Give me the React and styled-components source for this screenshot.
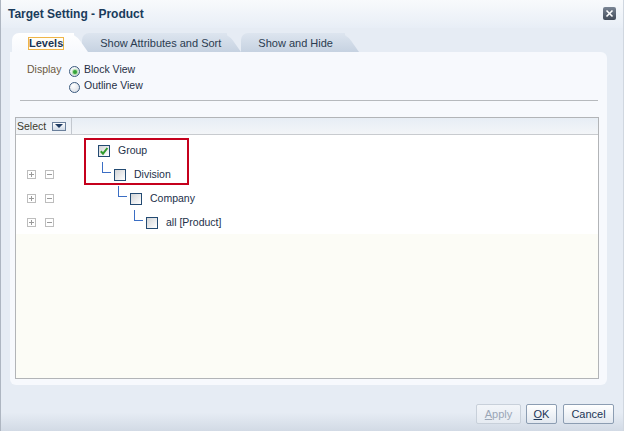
import React from "react";
import styled, { createGlobalStyle } from "styled-components";

const Global = createGlobalStyle`
  html, body { margin: 0; padding: 0; }
  body {
    width: 624px; height: 431px; overflow: hidden;
    background: #e6ecf4;
    font-family: "Liberation Sans", Arial, sans-serif;
  }
`;

const Window = styled.div`
  width: 624px;
  height: 431px;
  box-sizing: border-box;
  display: flex;
  flex-direction: column;
  background: #e6ecf4;
  border-left: 1px solid #aeb6c1;
  border-right: 1px solid #d0d7e0;
`;

const TitleBar = styled.div`
  height: 28px;
  flex: none;
  display: flex;
  align-items: center;
  justify-content: space-between;
  padding: 0 7px 0 7px;
  background: linear-gradient(#f8fafc, #e8eef6);
`;

const Title = styled.div`
  font-size: 12px;
  font-weight: bold;
  color: #1a3b5b;
  margin-top: 0;
`;

const CloseButton = styled.div`
  width: 13px;
  height: 13px;
  border-radius: 2px;
  background: linear-gradient(#7a8594, #434c59);
  display: flex;
  align-items: center;
  justify-content: center;
  margin-top: -2px;
`;

const TabRow = styled.div`
  flex: none;
  display: flex;
  height: 19px;
  margin-top: 5px;
  padding-left: 11px;
`;

const Tab = styled.div`
  position: relative;
  height: 19px;
  box-sizing: border-box;
  display: flex;
  align-items: center;
  padding: 2px ${(p) => p.$pr}px 0 ${(p) => p.$pl}px;
  margin-left: ${(p) => p.$ml}px;
  font-size: 11px;
  color: ${(p) => (p.$active ? "#1a3554" : "#2a3b50")};
  font-weight: ${(p) => (p.$active ? "bold" : "normal")};
  background: ${(p) =>
    p.$active ? "linear-gradient(#ffffff, #f7f9fd)" : "linear-gradient(#dde5ef, #c6d2e1)"};
  border-top-left-radius: 7px;
  z-index: ${(p) => p.$z};
  &::after {
    content: "";
    position: absolute;
    top: 0;
    bottom: 0;
    right: -14px;
    width: 20px;
    background: inherit;
    border-top-right-radius: 8px;
    transform: skewX(35deg);
    transform-origin: bottom left;
    z-index: -1;
  }
`;

const TabLabel = styled.span`
  position: relative;
  line-height: 11px;
  border: 1px solid ${(p) => (p.$focus ? "#efb548" : "transparent")};
  background: ${(p) => (p.$focus ? "#fffdf6" : "transparent")};
  padding: 0 0;
`;

const Main = styled.div`
  flex: 1;
  display: flex;
  flex-direction: column;
  padding: 0 16px 0 9px;
`;

const Panel = styled.div`
  height: 333px;
  box-sizing: border-box;
  background: #f7f9fd;
  border-radius: 0 6px 6px 6px;
  display: flex;
  flex-direction: column;
  padding: 9px 8px 6px 5px;
  position: relative;
  z-index: 5;
`;

const Options = styled.div`
  display: flex;
  margin-left: 12px;
  font-size: 10.5px;
`;

const OptLabel = styled.div`
  color: #6b5a43;
  line-height: 16px;
  width: 42px;
`;

const RadioList = styled.div`
  display: flex;
  flex-direction: column;
`;

const RadioItem = styled.div`
  display: flex;
  align-items: center;
  height: 16px;
  color: #1f2f45;
  gap: 4px;
`;

const Radio = styled.span`
  width: 11px;
  height: 11px;
  box-sizing: border-box;
  border-radius: 50%;
  border: 1px solid #3b5a7e;
  background: radial-gradient(circle at 35% 30%, #ffffff, #d3d9e1);
  display: flex;
  align-items: center;
  justify-content: center;
  margin-top: 5px;
  &::after {
    content: "";
    width: 4px;
    height: 4px;
    border-radius: 50%;
    background: #35a33a;
    box-shadow: 0 0 1px 1px #a9dca5;
    display: ${(p) => (p.$checked ? "block" : "none")};
  }
`;

const Rule = styled.div`
  height: 1px;
  background: #b6b9bd;
  margin: 7px 1px 0 5px;
`;

const Table = styled.div`
  flex: 1;
  margin-top: 16px;
  border: 1px solid #b2b4b7;
  display: flex;
  flex-direction: column;
  background: #fcfcf6;
`;

const Header = styled.div`
  height: 16px;
  flex: none;
  display: flex;
  background: linear-gradient(#e7edf5, #f3f5f8);
  border-bottom: 1px solid #c8cbcf;
`;

const HeaderCell = styled.div`
  width: 54px;
  border-right: 1px solid #c3c8cf;
  display: flex;
  align-items: center;
  padding-left: 1px;
  font-size: 10.5px;
  color: #3a3a2c;
  gap: 6px;
`;

const DropButton = styled.span`
  width: 14px;
  height: 9px;
  box-sizing: border-box;
  border: 1px solid #6a7f9b;
  background: linear-gradient(#ffffff, #cfd9e6);
  display: flex;
  align-items: center;
  justify-content: center;
`;

const Body = styled.div`
  position: relative;
  flex: 1;
`;

const Rows = styled.div`
  background: #ffffff;
  padding-top: 3px;
`;

const Row = styled.div`
  height: 24px;
  display: flex;
  align-items: center;
`;

const ExpanderCol = styled.div`
  width: 82px;
  flex: none;
  display: flex;
  align-items: center;
  padding-left: 11px;
  box-sizing: border-box;
  gap: 9px;
`;

const ExpBox = styled.span`
  width: 9px;
  height: 9px;
  box-sizing: border-box;
  border: 1px solid #bdbdbd;
  position: relative;
  margin-top: 1px;
  &::before {
    content: "";
    position: absolute;
    left: 1px;
    right: 1px;
    top: 3px;
    height: 1px;
    background: #9a9a9a;
  }
  &::after {
    content: "";
    position: absolute;
    top: 1px;
    bottom: 1px;
    left: 3px;
    width: 1px;
    background: #9a9a9a;
    display: ${(p) => (p.$plus ? "block" : "none")};
  }
`;

const Node = styled.div`
  display: flex;
  align-items: center;
  padding-left: ${(p) => p.$indent}px;
  font-size: 10.5px;
  color: #22304a;
`;

const Connector = styled.span`
  width: 16px;
  height: 24px;
  position: relative;
  flex: none;
  &::before {
    content: "";
    position: absolute;
    left: 4px;
    top: 0px;
    width: 8px;
    height: 10px;
    border-left: 1px solid #3b6ec4;
    border-bottom: 1px solid #3b6ec4;
  }
`;

const Check = styled.span`
  width: 12px;
  height: 12px;
  box-sizing: border-box;
  border: 1px solid #234a72;
  background: linear-gradient(135deg, #d2d4d6, #ffffff);
  display: flex;
  align-items: center;
  justify-content: center;
  margin-right: 8px;
  margin-top: 1px;
  flex: none;
`;

const Highlight = styled.div`
  position: absolute;
  left: 68px;
  top: 3px;
  width: 105px;
  height: 47px;
  box-sizing: border-box;
  border: 2px solid #c5001c;
  pointer-events: none;
`;

const Footer = styled.div`
  flex: 1;
  display: flex;
  justify-content: flex-end;
  align-items: flex-start;
  padding: 19px 9px 0 0;
  background: linear-gradient(#e6ecf4 0%, #e6ecf4 60%, #d2dae5 100%);
  margin: 0 -16px 0 -9px;
`;

const Button = styled.button`
  height: 20px;
  width: ${(p) => p.$w}px;
  margin-left: ${(p) => p.$ml}px;
  box-sizing: border-box;
  border: 1px solid ${(p) => (p.disabled ? "#c8d0da" : "#8c9db2")};
  border-radius: 2px;
  background: ${(p) =>
    p.disabled ? "linear-gradient(#f2f5f9, #e6ebf2)" : "linear-gradient(#ffffff, #e2e8f0)"};
  color: ${(p) => (p.disabled ? "#9ba6b6" : "#1c3656")};
  font-family: "Liberation Sans", Arial, sans-serif;
  font-size: 11px;
  padding: 0;
  u { text-decoration: underline; }
`;

const levels = [
  { name: "Group", level: 0, checked: true, exp: false },
  { name: "Division", level: 1, checked: false, exp: true },
  { name: "Company", level: 2, checked: false, exp: true },
  { name: "all [Product]", level: 3, checked: false, exp: true },
];

export default function App() {
  return (
    <>
      <Global />
      <Window>
        <TitleBar>
          <Title>Target Setting - Product</Title>
          <CloseButton>
            <svg width="9" height="9" viewBox="0 0 9 9">
              <path d="M1.5 1.5 L7.5 7.5 M7.5 1.5 L1.5 7.5" stroke="#fff" strokeWidth="1.6" />
            </svg>
          </CloseButton>
        </TitleBar>
        <TabRow>
          <Tab $active $pl={16} $pr={10} $ml={0} $z={4}>
            <TabLabel $focus>Levels</TabLabel>
          </Tab>
          <Tab $pl={17} $pr={5} $ml={8} $z={2}>
            <TabLabel>Show Attributes and Sort</TabLabel>
          </Tab>
          <Tab $pl={16} $pr={11} $ml={14} $z={3}>
            <TabLabel>Show and Hide</TabLabel>
          </Tab>
        </TabRow>
        <Main>
          <Panel>
            <Options>
              <OptLabel>Display</OptLabel>
              <RadioList>
                <RadioItem>
                  <Radio $checked />
                  Block View
                </RadioItem>
                <RadioItem>
                  <Radio />
                  Outline View
                </RadioItem>
              </RadioList>
            </Options>
            <Rule />
            <Table>
              <Header>
                <HeaderCell>
                  Select
                  <DropButton>
                    <svg width="8" height="4" viewBox="0 0 8 4">
                      <path d="M0 0 L8 0 L4 4 Z" fill="#1f3b63" />
                    </svg>
                  </DropButton>
                </HeaderCell>
              </Header>
              <Body>
                <Rows>
                  {levels.map((l) => (
                    <Row key={l.name}>
                      <ExpanderCol>
                        {l.exp && (
                          <>
                            <ExpBox $plus />
                            <ExpBox />
                          </>
                        )}
                      </ExpanderCol>
                      <Node $indent={l.level > 0 ? (l.level - 1) * 16 : 0}>
                        {l.level > 0 && <Connector />}
                        <Check>
                          {l.checked && (
                            <svg width="10" height="10" viewBox="0 0 10 10">
                              <path
                                d="M1.8 5.2 L4 7.6 L8.4 2"
                                fill="none"
                                stroke="#2f9b2c"
                                strokeWidth="2"
                              />
                            </svg>
                          )}
                        </Check>
                        {l.name}
                      </Node>
                    </Row>
                  ))}
                </Rows>
                <Highlight />
              </Body>
            </Table>
          </Panel>
          <Footer>
            <Button disabled $w={45} $ml={0}>
              <u>A</u>pply
            </Button>
            <Button $w={31} $ml={5}>
              <u>O</u>K
            </Button>
            <Button $w={51} $ml={6}>
              Cancel
            </Button>
          </Footer>
        </Main>
      </Window>
    </>
  );
}
